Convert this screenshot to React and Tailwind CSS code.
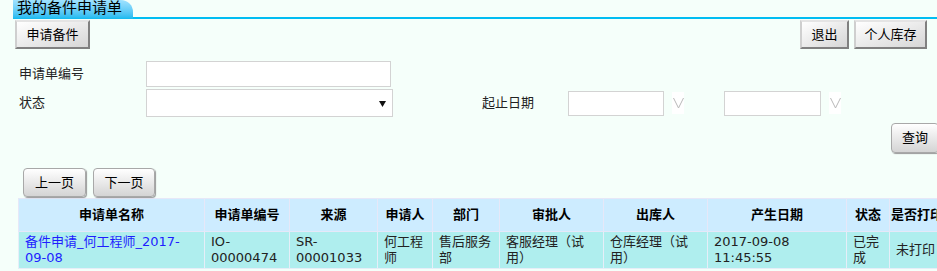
import React from 'react';

const font = { fontFamily: '"DejaVu Sans", "Noto Sans CJK SC", sans-serif' };

function GrayButton({ children, className = '' }) {
  return (
    <button
      className={
        'flex items-center justify-center h-[29px] text-[13px] text-black bg-gradient-to-br from-white to-[#d6d6d6] border-2 border-t-[#e4e4e4] border-l-[#cfcfcf] border-r-[#808080] border-b-[#808080] ' +
        className
      }
    >
      {children}
    </button>
  );
}

function RoundButton({ children, className = '' }) {
  return (
    <button
      className={
        'flex items-center justify-center text-[13px] text-black rounded-[4px] border border-[#a8a8a8] bg-gradient-to-b from-white to-[#d4d4d4] shadow-[1px_1px_1px_#9a9a9a] ' +
        className
      }
    >
      {children}
    </button>
  );
}

function Chevron() {
  return (
    <span className="ml-[8px] flex items-center justify-center w-[12px] h-[22px] bg-white">
      <svg width="11" height="12" viewBox="0 0 11 12">
        <polyline points="0.5,1 5.5,11 10.5,1" fill="none" stroke="#b8b8b8" strokeWidth="1" />
      </svg>
    </span>
  );
}

const cols = [186, 85, 88, 55, 67, 104, 104, 139, 43, 55];
const heads = ['申请单名称', '申请单编号', '来源', '申请人', '部门', '审批人', '出库人', '产生日期', '状态', '是否打印'];

export default function App() {
  return (
    <div className="w-[937px] h-[271px] overflow-hidden bg-[#f5fffa]" style={font}>
      <div className="w-[990px]">
        {/* title tab */}
        <div className="flex items-end h-[19px] w-[937px]">
          <div className="ml-[13px] w-[120px] h-[19px] rounded-tr-[12px] bg-gradient-to-b from-[#9fe2ff] to-[#0cbaf0] pl-[4px] text-[15px] leading-[17px] text-black">
            我的备件申请单
          </div>
          <div className="flex-1 h-[2px] bg-[#00bdf2]" />
        </div>

        {/* action buttons */}
        <div className="flex mt-[1px]">
          <GrayButton className="ml-[15px] w-[75px]">申请备件</GrayButton>
          <GrayButton className="ml-[710px] w-[49px]">退出</GrayButton>
          <GrayButton className="ml-[5px] w-[73px]">个人库存</GrayButton>
        </div>

        {/* filters */}
        <div className="flex items-center mt-[12px] h-[26px]">
          <span className="w-[146px] pl-[19px] text-[13px] text-[#222]">申请单编号</span>
          <input className="w-[245px] h-[26px] bg-white border border-[#d3d3d3] outline-none" />
        </div>
        <div className="flex items-center mt-[2px] h-[28px]">
          <span className="w-[146px] pl-[19px] text-[13px] text-[#222]">状态</span>
          <div className="relative w-[247px] h-[28px] bg-white border border-[#d3d3d3]">
            <svg className="absolute right-[6px] top-[11px]" width="7" height="6" viewBox="0 0 7 6">
              <polygon points="0,0 7,0 3.5,6" fill="#111" />
            </svg>
          </div>
          <span className="ml-[89px] w-[86px] text-[13px] text-[#222]">起止日期</span>
          <input className="w-[96px] h-[25px] bg-white border border-[#d3d3d3] outline-none" />
          <Chevron />
          <input className="ml-[40px] w-[97px] h-[25px] bg-white border border-[#d3d3d3] outline-none" />
          <Chevron />
        </div>
        <div className="flex mt-[6px]">
          <RoundButton className="ml-[891px] w-[48px] h-[30px]">查询</RoundButton>
        </div>

        {/* pager */}
        <div className="flex mt-[15px]">
          <RoundButton className="ml-[23px] w-[63px] h-[29px]">上一页</RoundButton>
          <RoundButton className="ml-[7px] w-[62px] h-[29px]">下一页</RoundButton>
        </div>

        {/* list */}
        <table className="ml-[18px] mt-[1px] table-fixed border-collapse text-[13px]" style={{ width: 926 }}>
          <colgroup>
            {cols.map((w, i) => (
              <col key={i} style={{ width: w }} />
            ))}
          </colgroup>
          <thead>
            <tr className="h-[33px] bg-[#cdecff]">
              {heads.map((h) => (
                <th key={h} className="border border-[#e6e8f8] font-bold text-black text-center align-middle whitespace-nowrap p-0">
                  {h}
                </th>
              ))}
            </tr>
          </thead>
          <tbody>
            <tr className="h-[37px] bg-[#afeeee] text-[#222] leading-[16px] align-middle">
              <td className="border border-[#e6eef8] px-[6px] text-[#1e1eff]">
                备件申请_何工程师_2017-
                <br />
                09-08
              </td>
              <td className="border border-[#e6eef8] px-[6px]">
                IO-
                <br />
                00000474
              </td>
              <td className="border border-[#e6eef8] px-[6px]">
                SR-
                <br />
                00001033
              </td>
              <td className="border border-[#e6eef8] px-[6px]">
                何工程
                <br />师
              </td>
              <td className="border border-[#e6eef8] px-[6px]">
                售后服务
                <br />部
              </td>
              <td className="border border-[#e6eef8] px-[6px]">
                客服经理（试
                <br />
                用）
              </td>
              <td className="border border-[#e6eef8] px-[6px]">
                仓库经理（试
                <br />
                用）
              </td>
              <td className="border border-[#e6eef8] px-[6px]">
                2017-09-08
                <br />
                11:45:55
              </td>
              <td className="border border-[#e6eef8] px-[6px]">
                已完
                <br />成
              </td>
              <td className="border border-[#e6eef8] px-[6px] whitespace-nowrap">未打印</td>
            </tr>
          </tbody>
        </table>
      </div>
    </div>
  );
}
